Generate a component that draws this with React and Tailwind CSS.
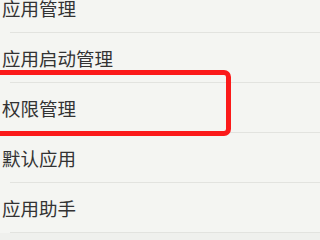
const ITEMS = ["应用管理", "应用启动管理", "权限管理", "默认应用", "应用助手"];

export default function App() {
  return (
    <div
      className="relative w-[320px] h-[240px] overflow-hidden bg-[#f4f5f2]"
      style={{ fontFamily: '"Noto Sans CJK SC", "Noto Sans", sans-serif' }}
    >
      <ul className="-mt-[17px]">
        {ITEMS.map((item) => (
          <li key={item} className="relative h-[50px] flex items-center pl-[2px]">
            <span className="text-[18.5px] leading-none text-[#333333]">{item}</span>
            <div className="absolute left-[10px] right-0 bottom-0 h-px bg-[#e2e3df]" />
          </li>
        ))}
      </ul>
      <div className="absolute inset-x-0 bottom-0 h-[7px] bg-[#eff0ed]" />

      {/* highlight box */}
      <div className="absolute left-[-12px] top-[70px] w-[243px] h-[66px] border-[5px] border-[#fb1a1a] rounded-[7px]" />
    </div>
  );
}
